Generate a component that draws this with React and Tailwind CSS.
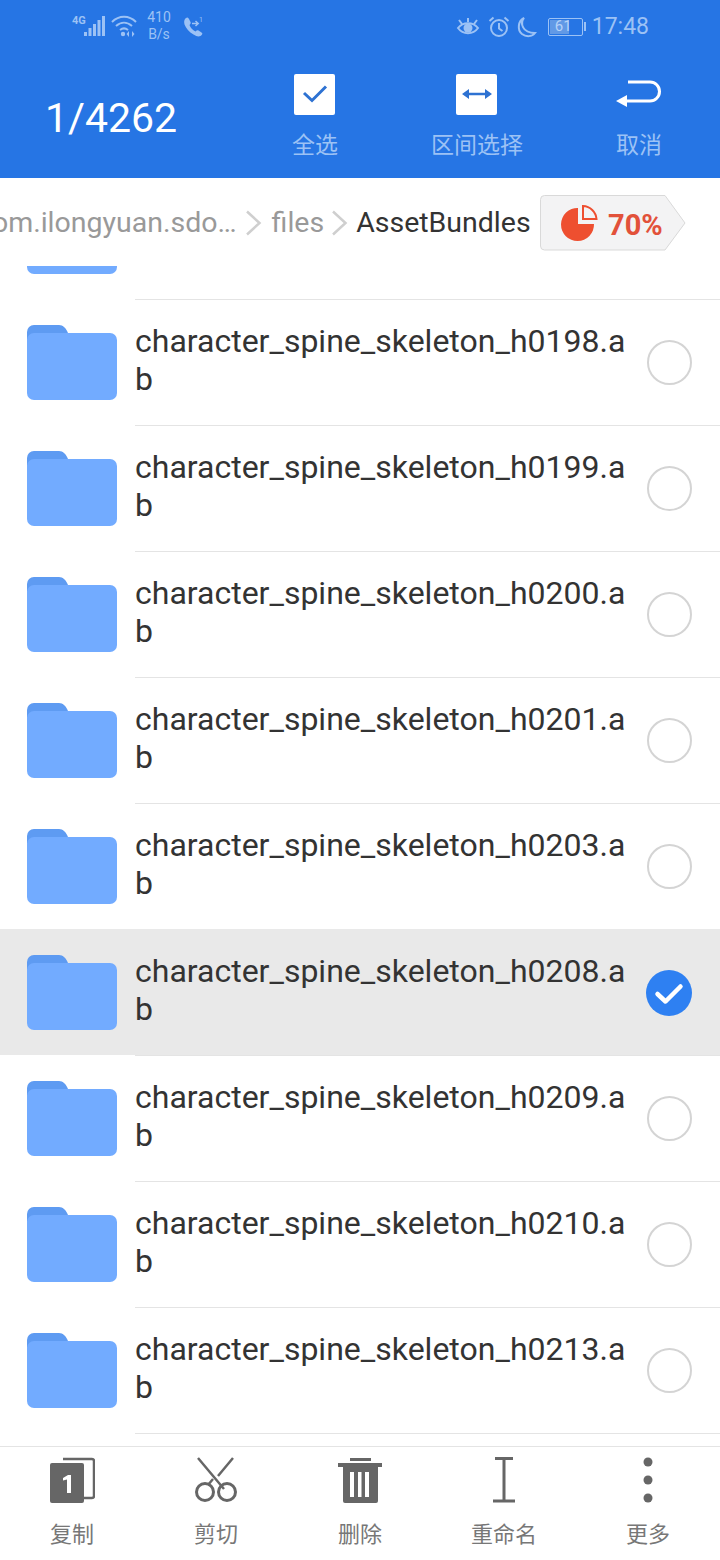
import React from 'react';

const FONT = "font-['Roboto','Noto_Sans_CJK_SC',sans-serif]";

const files = [
  { name: 'character_spine_skeleton_h0198.ab' },
  { name: 'character_spine_skeleton_h0199.ab' },
  { name: 'character_spine_skeleton_h0200.ab' },
  { name: 'character_spine_skeleton_h0201.ab' },
  { name: 'character_spine_skeleton_h0203.ab' },
  { name: 'character_spine_skeleton_h0208.ab', checked: true },
  { name: 'character_spine_skeleton_h0209.ab' },
  { name: 'character_spine_skeleton_h0210.ab' },
  { name: 'character_spine_skeleton_h0213.ab' },
];

function Folder() {
  return (
    <svg width="90" height="76" viewBox="0 0 90 76">
      <path d="M0 8a7 7 0 0 1 7-7h25c4 0 7 3 9 8H20L0 16z" fill="#5e9bf2" />
      <path d="M0 16a7 7 0 0 1 7-7h76a7 7 0 0 1 7 7v53a7 7 0 0 1-7 7H7a7 7 0 0 1-7-7z" fill="#72abff" />
    </svg>
  );
}

function Row({ name, checked }) {
  return (
    <div className={`flex h-[126px] ${checked ? 'bg-[#e9e9e9]' : ''}`}>
      <div className="w-[135px] shrink-0 pl-[27px] pt-[25px]">
        <Folder />
      </div>
      <div className={`flex flex-1 border-t ${checked ? 'border-[#e9e9e9]' : 'border-[#e4e4e4]'}`}>
        <div className="w-[496px] shrink-0 pt-[22px] text-[32px] leading-[38px] text-[#333333] break-all">{name}</div>
        <div className="flex flex-1 items-center justify-center pr-[13px]">
          {checked ? (
            <svg width="46" height="46" viewBox="0 0 46 46">
              <circle cx="23" cy="23" r="23" fill="#2e80f2" />
              <path d="M11.500 24l8 7.500 15-15" fill="none" stroke="#fff" strokeWidth="4.500" strokeLinecap="round" strokeLinejoin="round" />
            </svg>
          ) : (
            <div className="h-[45px] w-[45px] rounded-full border-2 border-[#d4d4d4]" />
          )}
        </div>
      </div>
    </div>
  );
}

function StatusBar() {
  return (
    <div className="flex h-[50px] items-center justify-between pl-[71px] pr-[71px] text-[#9cc2f5]">
      <div className="mt-[3px] flex items-center">
        <svg width="34" height="30" viewBox="0 0 34 30" className="mt-[-4px]">
          <text x="1" y="14" fontSize="11" fontWeight="700" fill="#9cc2f5" fontFamily="Roboto">4G</text>
          <rect x="13" y="22" width="3" height="4" fill="#9cc2f5" />
          <rect x="17.500" y="18" width="3" height="8" fill="#9cc2f5" />
          <rect x="22" y="14" width="3" height="12" fill="#9cc2f5" />
          <rect x="26.500" y="10" width="3" height="16" fill="#9cc2f5" />
          <rect x="31" y="6" width="3" height="20" fill="#9cc2f5" />
        </svg>
        <svg width="28" height="24" viewBox="0 0 28 24" className="ml-[5px] mt-[-2px]">
          <path d="M2 8c7-7 17-7 24 0M6 12c5-4.500 11-4.500 16 0M10 16c2.500-2 5.500-2 8 0" fill="none" stroke="#9cc2f5" strokeWidth="2" />
          <circle cx="13" cy="20" r="2.200" fill="#9cc2f5" />
          <path d="M19 17l-2.500 3 2.500 3zM22 17l2.500 3-2.500 3z" fill="#9cc2f5" />
        </svg>
        <div className="ml-[8px] mt-[-2px] w-[26px] text-center text-[14px] leading-[17px]">410<br />B/s</div>
        <svg width="22" height="24" viewBox="0 0 22 24" className="ml-[10px]">
          <path d="M3 4c2-2 3-2 4 0l1.500 3c.5 1 0 2-1 3 1 3 3 5 6 6.500 1-1 2-1.500 3-1l3 2c1.500 1 1 2-1 3.500-2 1-4 .5-7-1.500C7 17 4 13 2.500 9.500 2 7 2 5.500 3 4z" fill="#9cc2f5" />
          <path d="M10 8.500h6M13.500 6l2.700 2.500-2.700 2.500" fill="none" stroke="#9cc2f5" strokeWidth="1.500" />
          <text x="17" y="7" fontSize="7" fill="#9cc2f5" fontFamily="Roboto">1</text>
        </svg>
      </div>
      <div className="mt-[3px] flex items-center">
        <svg width="24" height="22" viewBox="0 0 24 22">
          <path d="M2 12c5-6.500 15-6.500 20 0-5 7-15 7-20 0z" fill="none" stroke="#9cc2f5" strokeWidth="2" />
          <circle cx="12" cy="12" r="4.500" fill="#9cc2f5" />
          <path d="M3 4l3 4M12 2v4M21 4l-3 4" stroke="#9cc2f5" strokeWidth="2" />
        </svg>
        <svg width="22" height="22" viewBox="0 0 22 22" className="ml-[8px]">
          <circle cx="11" cy="12" r="8" fill="none" stroke="#9cc2f5" strokeWidth="2" />
          <path d="M11 7v5.500l3.500 2.500M1.500 5l4-3.500M20.500 5l-4-3.500" fill="none" stroke="#9cc2f5" strokeWidth="2" />
        </svg>
        <svg width="22" height="22" viewBox="0 0 22 22" className="ml-[6px]">
          <path d="M8 2C4 7 6 17 19 17c-3 4-9 4-13 1C1 14 2 5 8 2z" fill="none" stroke="#9cc2f5" strokeWidth="2" />
        </svg>
        <div className="ml-[10px] flex items-center">
          <div className="relative h-[18px] w-[35px] rounded-[2px] border border-[#9cc2f5] p-[1px]">
            <div className="h-full w-[61%] bg-[#6199e6]" />
            <span className="absolute inset-0 flex items-center justify-center pr-[4px] text-[15px] leading-none text-[#b5d2f8]">61</span>
          </div>
          <div className="ml-[1px] h-[9px] w-[2px] bg-[#9cc2f5]" />
        </div>
        <span className="ml-[6px] text-[23px] leading-none">17:48</span>
      </div>
    </div>
  );
}

function ActionButton({ label, children }) {
  return (
    <div className="flex w-[162px] flex-col items-center">
      <div className="flex h-[42px] items-center justify-center">{children}</div>
      <div className="mt-[15px] text-[23px] leading-[32px] text-[#9cc2f5]">{label}</div>
    </div>
  );
}

function Header() {
  return (
    <div className="h-[178px] bg-[#2675e4]">
      <StatusBar />
      <div className="flex pt-[23px]">
        <div className="flex-1 pl-[45px] pt-[22px] text-[41px] leading-[46px] text-white">1/4262</div>
        <ActionButton label="全选">
          <div className="mr-[1px] flex h-[41px] w-[41px] items-center justify-center rounded-[2px] bg-white">
            <svg width="26" height="20" viewBox="0 0 26 20">
              <path d="M2 9l8 7.500L24 2.500" fill="none" stroke="#2e72d2" strokeWidth="3" />
            </svg>
          </div>
        </ActionButton>
        <ActionButton label="区间选择">
          <div className="mr-[1px] flex h-[41px] w-[41px] items-center justify-center rounded-[2px] bg-white">
            <svg width="30" height="12" viewBox="0 0 30 12">
              <path d="M5 6h20" stroke="#2e72d2" strokeWidth="2.500" />
              <path d="M0 6l7-5v10zM30 6l-7-5v10z" fill="#2e72d2" />
            </svg>
          </div>
        </ActionButton>
        <ActionButton label="取消">
          <svg width="46" height="30" viewBox="0 0 46 30">
            <path d="M10 22h24a9.500 9.500 0 0 0 0-19H12" fill="none" stroke="#fff" strokeWidth="3" />
            <path d="M0 22l11-6v12z" fill="#fff" />
          </svg>
        </ActionButton>
      </div>
    </div>
  );
}

function Chevron() {
  return (
    <svg width="17" height="26" viewBox="0 0 17 26" className="shrink-0">
      <path d="M2 1.500L14.500 13 2 24.500" fill="none" stroke="#cfcfcf" strokeWidth="2.500" />
    </svg>
  );
}

function Breadcrumb() {
  return (
    <div className="flex h-[88px] items-center overflow-hidden pt-[2px] text-[28.500px]">
      <span className="ml-[-23px] shrink-0 text-[#999999]">com.ilongyuan.sdo…</span>
      <span className="ml-[8px]"><Chevron /></span>
      <span className="ml-[10px] shrink-0 text-[#999999]">files</span>
      <span className="ml-[7px]"><Chevron /></span>
      <span className="ml-[8px] shrink-0 text-[#333333]">AssetBundles</span>
      <svg width="146" height="56" viewBox="0 0 146 56" className="ml-[9px] mt-[-1px] shrink-0">
        <path d="M4.500.500H125L145 28 125 55H4.500a4 4 0 0 1-4-4V4.500a4 4 0 0 1 4-4z" fill="#f3f3f4" stroke="#d9d9d9" />
        <path d="M39 12v16h16a16.500 16.500 0 1 1-16-16z" fill="#ee4f30" transform="translate(-1 1)" />
        <path d="M43 11v13h13.500A14 14 0 0 0 43 11z" fill="none" stroke="#ee4f30" strokeWidth="2" />
        <text x="68" y="40" fontSize="29" fontWeight="700" fill="#e2513a" fontFamily="Roboto">70%</text>
      </svg>
    </div>
  );
}

function BottomItem({ label, children }) {
  return (
    <div className="flex flex-col items-center">
      <div className="flex h-[46px] items-center justify-center">{children}</div>
      <div className="mt-[17px] text-[22px] leading-[30px] text-[#777777]">{label}</div>
    </div>
  );
}

function BottomBar() {
  return (
    <div className="grid h-[114px] grid-cols-5 border-t border-[#e4e4e4] bg-white pt-[10px]">
      <BottomItem label="复制">
        <svg width="46" height="46" viewBox="0 0 46 46">
          <path d="M14 2h29a2 2 0 0 1 2 2v35a2 2 0 0 1-2 2h-8" fill="none" stroke="#666" strokeWidth="2.500" />
          <rect x="1" y="6" width="34" height="40" rx="2" fill="#666" />
          <path d="M14 21l5-3h3v18h-4V22.500l-4 1z" fill="#fff" />
        </svg>
      </BottomItem>
      <BottomItem label="剪切">
        <svg width="44" height="46" viewBox="0 0 44 46">
          <path d="M4 1l26 31M39 1L24 19" fill="none" stroke="#666" strokeWidth="2.500" />
          <circle cx="11" cy="35" r="8.500" fill="none" stroke="#666" strokeWidth="3" />
          <circle cx="33" cy="35" r="8.500" fill="none" stroke="#666" strokeWidth="3" />
          <path d="M14 28l5-6" stroke="#666" strokeWidth="2.500" />
        </svg>
      </BottomItem>
      <BottomItem label="删除">
        <svg width="44" height="46" viewBox="0 0 44 46">
          <path d="M12 1h21v3H12zM0 6h44v4H0z" fill="#666" />
          <path d="M5 10h35v34a2 2 0 0 1-2 2H7a2 2 0 0 1-2-2z" fill="#666" />
          <path d="M12 15h4v25h-4zM20 15h3.500v25H20zM27 15h4v25h-4z" fill="#fff" />
        </svg>
      </BottomItem>
      <BottomItem label="重命名">
        <svg width="22" height="46" viewBox="0 0 22 46">
          <path d="M2 1.500h18M11 2v42M0 44h22" fill="none" stroke="#666" strokeWidth="3" />
        </svg>
      </BottomItem>
      <BottomItem label="更多">
        <svg width="10" height="46" viewBox="0 0 10 46">
          <circle cx="5" cy="5" r="4.500" fill="#666" />
          <circle cx="5" cy="23" r="4.500" fill="#666" />
          <circle cx="5" cy="41" r="4.500" fill="#666" />
        </svg>
      </BottomItem>
    </div>
  );
}

export default function App() {
  return (
    <div className={`flex h-[1560px] w-[720px] flex-col overflow-hidden bg-white ${FONT}`}>
      <Header />
      <Breadcrumb />
      <div className="h-[1180px] overflow-hidden">
        <div className="mt-[-93px]">
          <Row name="character_spine_skeleton_h0197.ab" />
          {files.map((f) => (
            <Row key={f.name} name={f.name} checked={f.checked} />
          ))}
          <Row name="character_spine_skeleton_h0214.ab" />
        </div>
      </div>
      <BottomBar />
    </div>
  );
}
